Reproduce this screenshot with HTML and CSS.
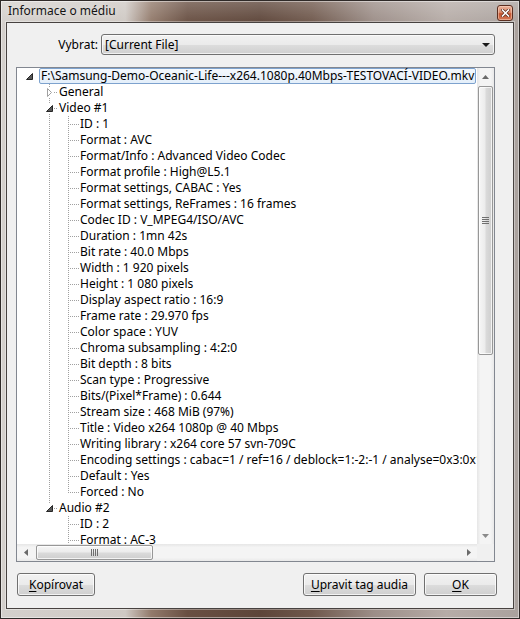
FILE: index.html
```html
<!DOCTYPE html>
<html lang="cs">
<head>
<meta charset="utf-8">
<title>Informace o médiu</title>
<link rel="stylesheet" href="styles.css">
</head>
<body>
<div class="window">
  <div class="titlebar">
    <span class="title">Informace o médiu</span>
    <span class="close">
      <svg width="9" height="8" viewBox="0 0 9 8"><path d="M1.5 1 L7.5 7 M7.5 1 L1.5 7" stroke="#5a2a1a" stroke-width="3" stroke-linecap="square"/><path d="M1.5 1 L7.5 7 M7.5 1 L1.5 7" stroke="#ffffff" stroke-width="1.6" stroke-linecap="square"/></svg>
    </span>
  </div>
  <div class="client">
    <div class="select-row">
      <span class="select-label">Vybrat:</span>
      <div class="combo">
        <span class="combo-text">[Current File]</span>
        <svg class="combo-arrow" width="8" height="4" viewBox="0 0 8 4"><polygon points="0,0 8,0 4,4" fill="#1a1a1a"/></svg>
      </div>
    </div>
    <div class="tree">
      <div class="tree-content">
        <div class="row l0"><span class="gut"><svg class="exp" width="9" height="10" viewBox="0 0 9 10"><polygon points="7.5,2.5 7.5,8.5 1.5,8.5" fill="#595959" stroke="#262626"/></svg></span><span class="txt sel">F:\Samsung-Demo-Oceanic-Life---x264.1080p.40Mbps-TESTOVACÍ-VIDEO.mkv</span></div>
        <div class="row l1 full"><span class="gut"><svg class="exp" width="9" height="10" viewBox="0 0 9 10"><polygon points="2.5,1.5 6.5,5.5 2.5,9.5" fill="#ffffff" stroke="#a0a0a0"/></svg></span><span class="txt">General</span></div>
        <div class="row l1 full"><span class="gut"><svg class="exp" width="9" height="10" viewBox="0 0 9 10"><polygon points="7.5,2.5 7.5,8.5 1.5,8.5" fill="#595959" stroke="#262626"/></svg></span><span class="txt">Video #1</span></div>
        <div class="row l2 cont"><span class="gut"></span><span class="txt">ID : 1</span></div>
        <div class="row l2 cont"><span class="gut"></span><span class="txt">Format : AVC</span></div>
        <div class="row l2 cont"><span class="gut"></span><span class="txt">Format/Info : Advanced Video Codec</span></div>
        <div class="row l2 cont"><span class="gut"></span><span class="txt">Format profile : High@L5.1</span></div>
        <div class="row l2 cont"><span class="gut"></span><span class="txt">Format settings, CABAC : Yes</span></div>
        <div class="row l2 cont"><span class="gut"></span><span class="txt">Format settings, ReFrames : 16 frames</span></div>
        <div class="row l2 cont"><span class="gut"></span><span class="txt">Codec ID : V_MPEG4/ISO/AVC</span></div>
        <div class="row l2 cont"><span class="gut"></span><span class="txt">Duration : 1mn 42s</span></div>
        <div class="row l2 cont"><span class="gut"></span><span class="txt">Bit rate : 40.0 Mbps</span></div>
        <div class="row l2 cont"><span class="gut"></span><span class="txt">Width : 1 920 pixels</span></div>
        <div class="row l2 cont"><span class="gut"></span><span class="txt">Height : 1 080 pixels</span></div>
        <div class="row l2 cont"><span class="gut"></span><span class="txt">Display aspect ratio : 16:9</span></div>
        <div class="row l2 cont"><span class="gut"></span><span class="txt">Frame rate : 29.970 fps</span></div>
        <div class="row l2 cont"><span class="gut"></span><span class="txt">Color space : YUV</span></div>
        <div class="row l2 cont"><span class="gut"></span><span class="txt">Chroma subsampling : 4:2:0</span></div>
        <div class="row l2 cont"><span class="gut"></span><span class="txt">Bit depth : 8 bits</span></div>
        <div class="row l2 cont"><span class="gut"></span><span class="txt">Scan type : Progressive</span></div>
        <div class="row l2 cont"><span class="gut"></span><span class="txt">Bits/(Pixel*Frame) : 0.644</span></div>
        <div class="row l2 cont"><span class="gut"></span><span class="txt">Stream size : 468 MiB (97%)</span></div>
        <div class="row l2 cont"><span class="gut"></span><span class="txt">Title : Video x264 1080p @ 40 Mbps</span></div>
        <div class="row l2 cont"><span class="gut"></span><span class="txt">Writing library : x264 core 57 svn-709C</span></div>
        <div class="row l2 cont"><span class="gut"></span><span class="txt">Encoding settings : cabac=1 / ref=16 / deblock=1:-2:-1 / analyse=0x3:0x113 / me=umh / subme=9 / psy_rd=1.0:0.0</span></div>
        <div class="row l2 cont"><span class="gut"></span><span class="txt">Default : Yes</span></div>
        <div class="row l2 cont last"><span class="gut"></span><span class="txt">Forced : No</span></div>
        <div class="row l1 top"><span class="gut"><svg class="exp" width="9" height="10" viewBox="0 0 9 10"><polygon points="7.5,2.5 7.5,8.5 1.5,8.5" fill="#595959" stroke="#262626"/></svg></span><span class="txt">Audio #2</span></div>
        <div class="row l2"><span class="gut"></span><span class="txt">ID : 2</span></div>
        <div class="row l2"><span class="gut"></span><span class="txt">Format : AC-3</span></div>
        <div class="row l2"><span class="gut"></span><span class="txt">Format/Info : Audio Coding 3</span></div>
        <div class="row l2"><span class="gut"></span><span class="txt">Duration : 1mn 42s</span></div>
      </div>
      <div class="vscroll">
        <div class="sb-btn"><svg width="7" height="4" viewBox="0 0 7 4"><polygon points="3.5,0 7,4 0,4" fill="#6a6a6a"/></svg></div>
        <div class="vtrack">
          <div class="vthumb">
            <svg width="7" height="7" viewBox="0 0 7 7"><path d="M0 0.5 H7 M0 2.5 H7 M0 4.5 H7 M0 6.5 H7" stroke="#6f6f6f" stroke-width="1"/></svg>
          </div>
        </div>
        <div class="sb-btn"><svg width="7" height="4" viewBox="0 0 7 4"><polygon points="0,0 7,0 3.5,4" fill="#8a8a8a"/></svg></div>
      </div>
      <div class="hscroll">
        <div class="sb-btn"><svg width="4" height="7" viewBox="0 0 4 7"><polygon points="4,0 4,7 0,3.5" fill="#6a6a6a"/></svg></div>
        <div class="htrack">
          <div class="hthumb">
            <svg width="7" height="7" viewBox="0 0 7 7"><path d="M0.5 0 V7 M2.5 0 V7 M4.5 0 V7 M6.5 0 V7" stroke="#6f6f6f" stroke-width="1"/></svg>
          </div>
        </div>
        <div class="sb-btn"><svg width="4" height="7" viewBox="0 0 4 7"><polygon points="0,0 4,3.5 0,7" fill="#6a6a6a"/></svg></div>
      </div>
      <div class="corner"></div>
    </div>
    <div class="buttons">
      <button class="btn btn-copy"><u>K</u>opírovat</button>
      <span class="spacer"></span>
      <button class="btn btn-edit"><u>U</u>pravit tag audia</button>
      <button class="btn btn-ok"><u>O</u>K</button>
    </div>
  </div>
</div>
</body>
</html>
```

FILE: styles.css
```css
* { box-sizing: border-box; }

html, body {
  margin: 0;
  padding: 0;
  width: 520px;
  height: 619px;
  overflow: hidden;
  background: #6b5548;
}

body {
  font-family: "Noto Sans", "Open Sans", sans-serif;
  font-size: 12px;
  color: #000;
}

.window {
  width: 520px;
  height: 619px;
  border: 1px solid #2f2a28;
  padding: 0 5px 9px 5px;
  display: flex;
  flex-direction: column;
  background:
    linear-gradient(to bottom, rgba(255,255,255,0.22), rgba(255,255,255,0) 24px),
    linear-gradient(to right, #d4d0cc 0%, #cfc9c4 24%, #927a6b 29%, #684f42 36%, #5d4539 50%, #6f584c 60%, #9c8e88 72%, #b6aca7 86%, #aaa29e 100%);
  box-shadow: inset 0 0 0 1px rgba(255,255,255,0.45);
}

.titlebar {
  height: 21px;
  flex: none;
  display: flex;
  align-items: flex-start;
  justify-content: space-between;
  padding-left: 2px;
}

.title {
  margin-top: 2px;
  line-height: 16px;
  color: #141414;
  text-shadow: 0 0 6px rgba(255,255,255,0.7);
}

.close {
  margin-top: 4px;
  margin-right: 1px;
  width: 16px;
  height: 16px;
  border: 1px solid #5b2e20;
  border-radius: 3px;
  display: flex;
  align-items: center;
  justify-content: center;
  background: linear-gradient(to bottom, #eab29b 0%, #d98a6c 45%, #c3532f 55%, #d47a58 100%);
  box-shadow: inset 0 0 0 1px rgba(255,220,200,0.5);
}

.client {
  flex: 1;
  border: 1px solid #474240;
  background: #f0f0f0;
  display: flex;
  flex-direction: column;
  padding-top: 11px;
  box-shadow: 0 0 0 1px rgba(255,255,255,0.35);
}

.select-row {
  height: 21px;
  flex: none;
  display: flex;
  align-items: center;
  padding-left: 47px;
  margin-right: 18px;
}

.select-label {
  width: 44px;
  text-align: right;
  margin-right: 3px;
  line-height: 16px;
}

.combo {
  flex: 1;
  height: 21px;
  border: 1px solid #707070;
  border-radius: 3px;
  background: linear-gradient(to bottom, #f2f2f2 0%, #ebebeb 50%, #dddddd 51%, #cfcfcf 100%);
  box-shadow: inset 0 0 0 1px rgba(255,255,255,0.7);
  display: flex;
  align-items: center;
  justify-content: space-between;
  padding: 0 4px 0 3px;
}

.combo-text { line-height: 16px; }

.combo-arrow { display: block; }

.tree {
  margin: 12px 18px 0 9px;
  height: 495px;
  flex: none;
  border: 1px solid #828790;
  background: #fff;
  display: grid;
  grid-template-columns: 1fr 17px;
  grid-template-rows: 1fr 17px;
}

.tree-content {
  overflow: hidden;
  min-width: 0;
  min-height: 0;
}

.row {
  height: 16px;
  display: flex;
  align-items: center;
  white-space: nowrap;
}

.gut {
  flex: none;
  height: 16px;
  display: flex;
  align-items: flex-start;
  background-repeat: no-repeat;
}

.exp {
  display: block;
  margin-top: 3px;
  background: #fff;
}

.txt {
  flex: none;
  line-height: 16px;
}

/* level 0 */
.l0 .gut { width: 22px; }
.l0 .exp { margin-left: 8px; }
.sel {
  height: 16px;
  line-height: 14px;
  border: 1px solid #7da2ce;
  border-radius: 2px;
  padding: 0 1px;
  background: linear-gradient(to bottom, #f3f8fd, #e4effa);
}

/* level 1 */
.l1 .gut { width: 42px; }
.l1 .exp { margin-left: 28px; }
.l1.full .gut {
  background-image:
    repeating-linear-gradient(to right, #a0a0a0 0 1px, transparent 1px 2px),
    repeating-linear-gradient(to bottom, #a0a0a0 0 1px, transparent 1px 2px);
  background-position: 37px 8px, 32px 0;
  background-size: 4px 1px, 1px 16px;
}
.l1.top .gut {
  background-image:
    repeating-linear-gradient(to right, #a0a0a0 0 1px, transparent 1px 2px),
    repeating-linear-gradient(to bottom, #a0a0a0 0 1px, transparent 1px 2px);
  background-position: 37px 8px, 32px 0;
  background-size: 4px 1px, 1px 9px;
}

/* level 2 */
.l2 .gut {
  width: 63px;
  background-image:
    repeating-linear-gradient(to right, #a0a0a0 0 1px, transparent 1px 2px),
    repeating-linear-gradient(to bottom, #a0a0a0 0 1px, transparent 1px 2px);
  background-position: 53px 8px, 51px 0;
  background-size: 9px 1px, 1px 16px;
}
.l2.cont .gut {
  background-image:
    repeating-linear-gradient(to right, #a0a0a0 0 1px, transparent 1px 2px),
    repeating-linear-gradient(to bottom, #a0a0a0 0 1px, transparent 1px 2px),
    repeating-linear-gradient(to bottom, #a0a0a0 0 1px, transparent 1px 2px);
  background-position: 53px 8px, 51px 0, 32px 0;
  background-size: 9px 1px, 1px 16px, 1px 16px;
}
.l2.cont.last .gut {
  background-size: 9px 1px, 1px 9px, 1px 16px;
}

/* scrollbars */
.vscroll {
  display: grid;
  grid-template-rows: 17px 1fr 17px;
  background: linear-gradient(to right, #e6e6e6 0%, #f4f4f4 20%, #f4f4f4 80%, #e9e9e9 100%);
}

.hscroll {
  display: grid;
  grid-template-columns: 17px 1fr 17px;
  background: linear-gradient(to bottom, #e6e6e6 0%, #f4f4f4 20%, #f4f4f4 80%, #e9e9e9 100%);
}

.sb-btn {
  display: flex;
  align-items: center;
  justify-content: center;
}

.vtrack {
  padding: 1px 1px 0 1px;
  min-height: 0;
}

.vthumb {
  height: 269px;
  border: 1px solid #979797;
  border-radius: 2px;
  background: linear-gradient(to right, #f6f6f6 0%, #ececec 45%, #dadada 55%, #cecece 100%);
  box-shadow: inset 0 0 0 1px rgba(255,255,255,0.75);
  display: flex;
  align-items: center;
  justify-content: center;
}

.htrack {
  padding: 1px 0 1px 2px;
  min-width: 0;
}

.hthumb {
  width: 117px;
  height: 15px;
  border: 1px solid #979797;
  border-radius: 2px;
  background: linear-gradient(to bottom, #f6f6f6 0%, #ececec 45%, #dadada 55%, #cecece 100%);
  box-shadow: inset 0 0 0 1px rgba(255,255,255,0.75);
  display: flex;
  align-items: center;
  justify-content: center;
}

.corner { background: #f0f0f0; }

/* buttons */
.buttons {
  margin-top: 11px;
  height: 23px;
  flex: none;
  display: flex;
  gap: 8px;
  padding: 0 16px 0 10px;
}

.spacer { flex: 1; }

.btn {
  height: 23px;
  border: 1px solid #707070;
  border-radius: 3px;
  background: linear-gradient(to bottom, #f2f2f2 0%, #ebebeb 50%, #dddddd 51%, #cfcfcf 100%);
  box-shadow: inset 0 0 0 1px rgba(255,255,255,0.75);
  font-family: "Noto Sans", "Open Sans", sans-serif;
  font-size: 12px;
  color: #000;
  padding: 0;
  line-height: 16px;
}

.btn u { text-decoration-thickness: 1px; text-underline-offset: 2px; }

.btn-copy { width: 78px; }
.btn-edit { width: 113px; }
.btn-ok { width: 73px; }
```
